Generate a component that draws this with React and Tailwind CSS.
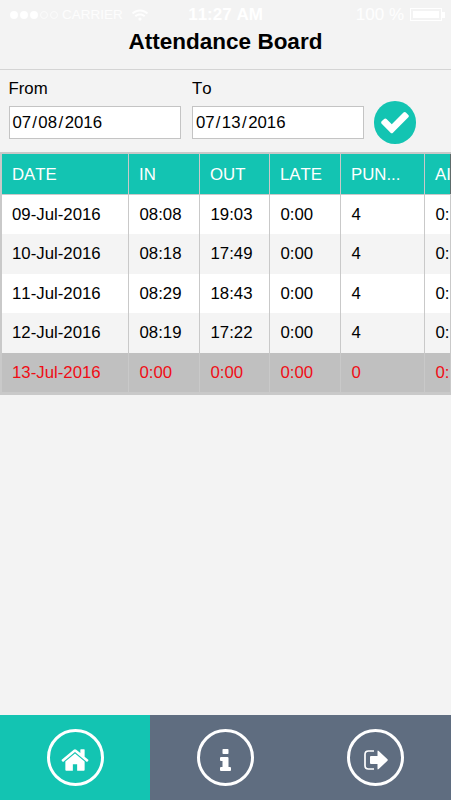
import { FaWifi } from "react-icons/fa";

const columns = ["DATE", "IN", "OUT", "LATE", "PUN...", "AI"];

const records = [
  ["09-Jul-2016", "08:08", "19:03", "0:00", "4", "0:"],
  ["10-Jul-2016", "08:18", "17:49", "0:00", "4", "0:"],
  ["11-Jul-2016", "08:29", "18:43", "0:00", "4", "0:"],
  ["12-Jul-2016", "08:19", "17:22", "0:00", "4", "0:"],
  ["13-Jul-2016", "0:00", "0:00", "0:00", "0", "0:"],
];

const gridCols = "grid grid-cols-[127px_71px_70px_71px_84px_26px]";

const StatusBar = () => (
  <div className="flex h-7 items-center pl-2.5 pr-1.5 pt-px text-[16px] leading-7 text-white">
    <div className="flex flex-1 items-center">
      <div className="flex gap-[2px]">
        {[1, 1, 1, 0, 0].map((filled, i) => (
          <span
            key={i}
            className={`h-2 w-2 rounded-full border border-white/60 ${
              filled ? "bg-white" : ""
            }`}
          />
        ))}
      </div>
      <span className="ml-[4px] w-[62px] text-[13.5px] whitespace-nowrap text-white/80">
        CARRIER
      </span>
      <FaWifi className="ml-2 h-3.5 w-[16px] text-white/90" />
    </div>
    <span className="mr-1 text-[17px] font-bold">11:27 AM</span>
    <div className="flex flex-1 items-center justify-end">
      <span className="mr-[6px] text-[17px] whitespace-nowrap text-white/90">
        100 %
      </span>
      <div className="h-[13px] w-8 border border-white p-[2px]">
        <div className="h-full w-full bg-white" />
      </div>
      <div className="h-1.5 w-[3px] bg-white" />
    </div>
  </div>
);

const DateField = ({ label, value }) => {
  const [month, day, year] = value.split("/");
  return (
    <div className="w-[172px]">
      <div className="h-[27px] text-[16.8px] leading-[20px]">{label}</div>
      <div className="flex h-[33px] items-center border border-[#c4c4c4] bg-white pl-[2px] pt-px text-[16.8px]">
        <span className="px-px">{month}</span>/
        <span className="px-[1.5px]">{day}</span>/
        <span className="px-[1.5px]">{year}</span>
      </div>
    </div>
  );
};

const AttendanceTable = () => (
  <div className="w-full border-t-2 border-b-[3px] border-l-2 border-[#c9c9c9] text-[16.8px]">
    <div
      className={`${gridCols} h-[40.5px] border-b border-[#c9c9c9] bg-[#13c4b2] text-white`}
    >
      {columns.map((name) => (
        <div
          key={name}
          className="h-[39.5px] border-r border-[#c9c9c9] pl-[10px] leading-[42px] whitespace-nowrap last:border-[#5c6b6a]"
        >
          {name}
        </div>
      ))}
    </div>
    {records.map((row, i) => (
      <div
        key={row[0]}
        className={`${gridCols} h-[39.5px] ${
          row[4] === "0"
            ? "bg-[#c0c0c0] text-[#ef0d15]"
            : i % 2
              ? "bg-[#f4f4f4]"
              : "bg-white"
        }`}
      >
        {row.map((cell, j) => (
          <div
            key={j}
            className="h-[39.5px] border-r border-[#c9c9c9] pl-[10.5px] leading-[40px] whitespace-nowrap first:pl-[10px]"
          >
            {cell}
          </div>
        ))}
      </div>
    ))}
  </div>
);

const CheckIcon = () => (
  <svg className="h-8 w-8" viewBox="0 0 1792 1792" fill="currentColor">
    <path d="M1671 566q0 40-28 68l-724 724-136 136q-28 28-68 28t-68-28l-136-136-362-362q-28-28-28-68t28-68l136-136q28-28 68-28t68 28l294 295 656-657q28-28 68-28t68 28l136 136q28 28 28 68z" />
  </svg>
);

const HomeIcon = () => (
  <svg className="h-[30px] w-[30px]" viewBox="-64 0 1792 1792" fill="currentColor">
    <path d="M1408 992v480q0 26-19 45t-45 19h-384v-384h-256v384h-384q-26 0-45-19t-19-45v-480q0-1 .5-3t.5-3l575-474 575 474q1 2 1 6zm223-69l-62 74q-8 9-21 11h-3q-13 0-21-7l-692-577-692 577q-12 8-24 7-13-2-21-11l-62-74q-8-10-7-23.5t11-21.5l719-599q32-26 76-26t76 26l244 204v-195q0-14 9-23t23-9h192q14 0 23 9t9 23v408l219 182q10 8 11 21.5t-7 23.5z" />
  </svg>
);

const InfoIcon = () => (
  <svg className="h-[22px] w-[11px]" viewBox="0 0 11 22" fill="currentColor">
    <rect x="2.5" y="0" width="6" height="5" rx="0.8" />
    <path d="M1 8H7.5Q8.5 8 8.5 9V18H10Q11 18 11 19V21Q11 22 10 22H1Q0 22 0 21V19Q0 18 1 18H2.5V12H1Q0 12 0 11V9Q0 8 1 8Z" />
  </svg>
);

const LogoutIcon = () => (
  <svg className="h-5 w-6" viewBox="0 0 24 20" fill="none">
    <path
      d="M10 1H4.5Q1 1 1 4.5V15.5Q1 19 4.5 19H10"
      stroke="currentColor"
      strokeWidth="1.7"
    />
    <path
      d="M7 6H13.5V1.5Q13.5 0 14.7 1L23.5 9.3Q24 10 23.5 10.7L14.7 19Q13.5 20 13.5 18.5V14H7Q6 14 6 13V7Q6 6 7 6Z"
      fill="currentColor"
    />
  </svg>
);

const NavButton = ({ active, children }) => (
  <button
    className={`flex flex-1 items-center justify-center text-white ${
      active ? "bg-[#13c4b2]" : "bg-[#5f6d80]"
    }`}
  >
    <span className="flex h-[57px] w-[57px] items-center justify-center rounded-full border-3 border-white pt-[5px]">
      {children}
    </span>
  </button>
);

export default function App() {
  return (
    <div className="flex h-[800px] w-full flex-col overflow-hidden bg-[#f3f3f3] font-['Liberation_Sans',Arial,sans-serif] text-black [font-kerning:none]">
      <header className="h-[70px] border-b border-[#d4d4d4]">
        <StatusBar />
        <h1 className="text-center text-[22.5px] leading-[27px] font-bold">
          Attendance Board
        </h1>
      </header>

      {/* Date range filter */}
      <div className="flex h-[82px] gap-[11.5px] pt-[9px] pl-[8.5px]">
        <DateField label="From" value="07/08/2016" />
        <DateField label="To" value="07/13/2016" />
        <button className="mt-[22px] -ml-[2px] flex h-[42.5px] w-[42.5px] items-center justify-center rounded-full bg-[#13c4b2] text-white">
          <CheckIcon />
        </button>
      </div>

      <AttendanceTable />

      <nav className="mt-auto flex h-[85px]">
        <NavButton active>
          <HomeIcon />
        </NavButton>
        <NavButton>
          <InfoIcon />
        </NavButton>
        <NavButton>
          <LogoutIcon />
        </NavButton>
      </nav>
    </div>
  );
}
